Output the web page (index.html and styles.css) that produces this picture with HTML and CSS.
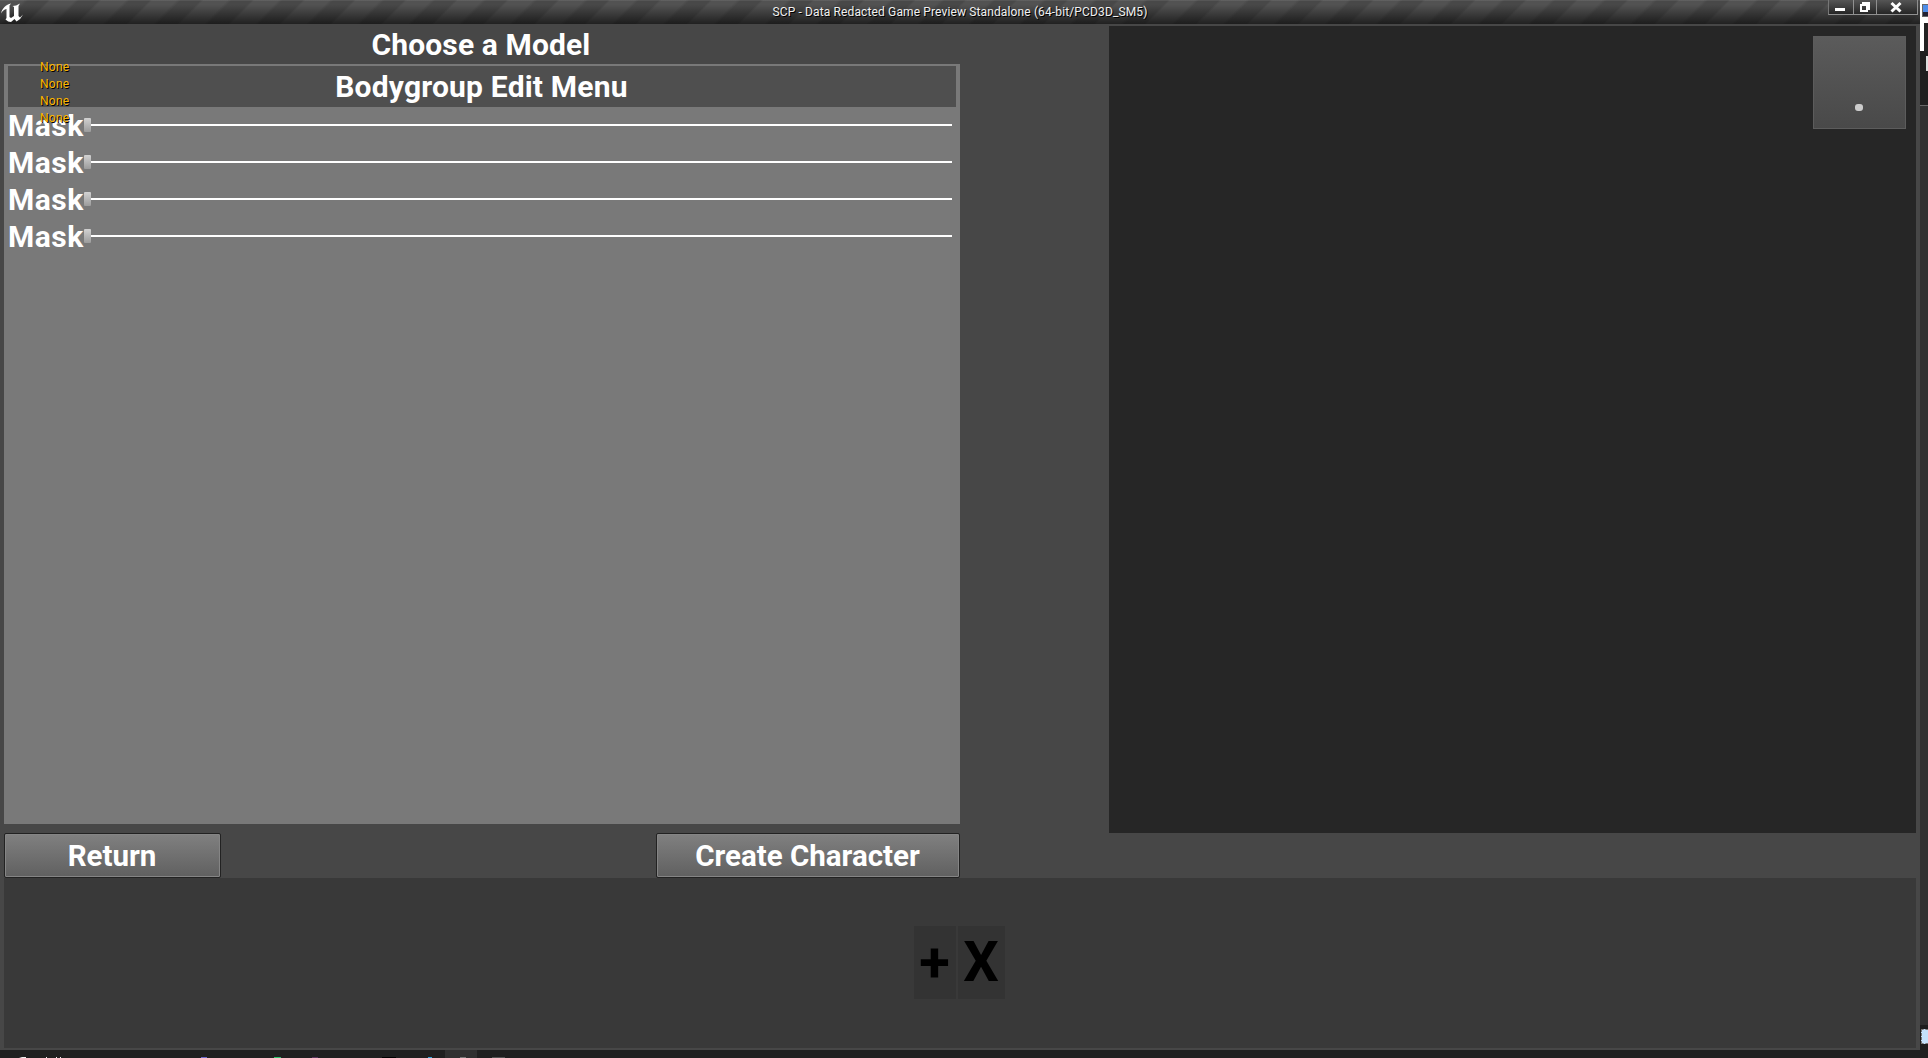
FILE: index.html
```html
<!DOCTYPE html>
<html lang="en">
<head>
<meta charset="utf-8">
<title>SCP - Data Redacted</title>
<link rel="stylesheet" href="styles.css">
</head>
<body>
<div class="desktop">
  <div class="window">
    <header class="titlebar">
      <svg class="logo" viewBox="0 0 24 24"><path d="M1 13.500C2 8.500 6 4.500 11 3.500L9.500 5.500V17L11 18L14 16V7L12.500 6Q16 6 20 3.500L18.500 6V16L20 17.500L23 14.500Q21 19 16.500 21.500L14.500 19L11 22Q8 22 5.500 19.500L6.500 18V9Q3 9.500 1 13.500Z" fill="#fff"/></svg>
      <div class="caption">SCP - Data Redacted Game Preview Standalone (64-bit/PCD3D_SM5)</div>
      <div class="controls">
        <div class="control"><svg viewBox="0 0 14 15"><path d="M2 8H12V11H2Z"/></svg></div>
        <div class="control"><svg viewBox="0 0 14 15"><path class="line" d="M5 4V3H11V9H10M3 5H9V11H3Z"/></svg></div>
        <div class="control wide"><svg viewBox="0 0 14 15"><path class="line cross" d="M2.500 3L11.500 11.500M11.500 3L2.500 11.500"/></svg></div>
      </div>
    </header>
    <main class="content">
      <section class="editor">
        <h1 class="heading">Choose a Model</h1>
        <div class="panel">
          <h2 class="panel-title">Bodygroup Edit Menu</h2>
          <div class="row"><span class="label">Mask</span><div class="slider"><i class="handle"></i></div></div>
          <div class="row"><span class="label">Mask</span><div class="slider"><i class="handle"></i></div></div>
          <div class="row"><span class="label">Mask</span><div class="slider"><i class="handle"></i></div></div>
          <div class="row"><span class="label">Mask</span><div class="slider"><i class="handle"></i></div></div>
        </div>
        <div class="actions">
          <button class="button return">Return</button>
          <button class="button create">Create Character</button>
        </div>
      </section>
      <section class="viewport"><div class="joystick"><i class="dot"></i></div></section>
    </main>
    <footer class="tray">
      <button class="tool plus">+</button>
      <button class="tool times">X</button>
    </footer>
    <div class="debug"><span>None</span><span>None</span><span>None</span><span>None</span></div>
  </div>
  <aside class="behind">
    <div class="behind-icon"><i></i></div>
    <div class="behind-tab"></div>
    <div class="behind-bar"><i></i></div>
    <div class="behind-body"></div>
    <div class="behind-status"><i></i></div>
  </aside>
  <div class="taskbar">
    <svg width="560" height="8" viewBox="0 0 560 8">
      <path fill="#303030" d="M445 0h32v8h-32z"/>
      <path fill="#eee" d="M19 8l3-1h4v1zM46 7h1v1h-1zM56 7h1v1h-1zM60 7h1v1h-1z"/>
      <path fill="#6a66c8" d="M201 7h6v1h-6z"/><path fill="#2fc36b" d="M274 7h7v1h-7z"/>
      <path fill="#58365c" d="M312 7h6v1h-6z"/><path fill="#000" d="M382 7h14v1h-14z"/>
      <path fill="#36a5dc" d="M428 7h4v1h-4z"/><path fill="#777" d="M460 7h6v1h-6z"/><path fill="#555" d="M492 7h13v1h-13z"/>
    </svg>
  </div>
</div>
</body>
</html>
```
FILE: styles.css
```css
* { box-sizing: border-box; }
body { margin: 0; overflow: hidden; background: #202020; font-family: Roboto, sans-serif; }
.desktop { display: grid; grid-template: 1050px 8px / 1920px 8px; width: 1928px; height: 1058px; }
.window { position: relative; display: flex; flex-direction: column; background: #474747; }
.titlebar {
  height: 24px; display: grid; grid-template-columns: 1fr auto 1fr;
  background: linear-gradient(#ffffff14 0 1px, transparent 1px),
    linear-gradient(#0000 0%, #0000 20%, #0009 100%),
    repeating-linear-gradient(135deg, #525252 0 17px, #484848 20px 34px, #525252 36px);
}
.logo { width: 24px; height: 24px; }
.caption { color: #f0f0f0; font-size: 12px; letter-spacing: .13px; line-height: 24px; text-shadow: 1px 1px 0 #000; white-space: nowrap; }
.controls { display: flex; justify-self: end; height: 15px; margin-right: 2px; }
.control { width: 26px; display: flex; justify-content: center; border: 1px solid #909090; border-top: 0; border-left-color: #777; background: linear-gradient(#555, #262626); }
.control + .control { border-left: 0; width: 23px; }
.control + .control.wide { width: 41px; padding-right: 2px; }
.control svg { width: 14px; height: 15px; flex: none; fill: #fff; }
.control:first-child svg { margin-right: 2px; }
.control .line { fill: none; stroke: #fff; stroke-width: 2; }
.control .cross { stroke-width: 3; }
.content { height: 854px; display: flex; justify-content: space-between; padding: 0 4px; }
.editor { width: 956px; display: flex; flex-direction: column; }
.heading, .panel-title { margin: 0; text-align: center; color: #fff; font-weight: 700; font-size: 30px; letter-spacing: .12px; }
.heading { height: 40px; line-height: 41px; padding-right: 2px; }
.panel { height: 760px; padding: 2px 4px; background: #797979; }
.panel-title { height: 41px; line-height: 41px; letter-spacing: .2px; padding-right: 1px; background: #4f4f4f; }
.row { height: 37px; display: flex; align-items: flex-start; padding-right: 4px; }
.label { width: 76px; flex: none; color: #fff; font-size: 30px; letter-spacing: .5px; line-height: 37px; font-weight: 700; }
.slider { flex: 1; height: 14px; margin-top: 11px; display: flex; align-items: center; }
.handle { width: 7px; height: 14px; background: linear-gradient(#d2d2d2, #9b9b9b); border-radius: 1px; }
.slider::after { content: ""; flex: 1; height: 2px; background: #fff; }
.actions { display: flex; justify-content: space-between; padding-top: 9px; }
.button { height: 45px; padding: 2px 1px 0 0; border: 1px solid #222; border-radius: 2px; background: linear-gradient(#808080, #606060); box-shadow: inset 0 0 0 1px #858585; font: 700 29.5px/41px Roboto, sans-serif; color: #fff; }
.return { width: 217px; }
.create { width: 304px; }
.viewport { width: 807px; height: 807px; margin-top: 2px; padding: 10px; background: #262626; display: flex; justify-content: flex-end; }
.joystick { width: 93px; height: 93px; display: flex; justify-content: center; align-items: flex-end; padding: 0 2px 17px 0; border: 1px solid #5c5c5c; background: linear-gradient(#5b5b5b, #494949); }
.dot { width: 8px; height: 7px; border-radius: 3px; background: #ccc; }
.tray { height: 170px; margin: 0 4px; padding: 48px 1px 0 0; display: flex; justify-content: center; gap: 2px; background: #393939; }
.tool { height: 73px; padding: 0; border: 0; background: #333; color: #000; font: 700 56px/71px Roboto, sans-serif; }
.plus { width: 42px; padding-right: 1px; }
.times { width: 47px; padding-right: 1px; }
.debug { position: absolute; left: 40px; top: 59px; display: flex; flex-direction: column; color: #fdb600; font-size: 12px; letter-spacing: .25px; line-height: 17px; text-shadow: 1px 1px 0 #000; }
.behind { display: flex; flex-direction: column; background: #303030; }
.behind-icon { height: 23px; padding: 4px 0 0 2px; background: #fff; }
.behind-icon i { display: block; width: 6px; height: 13px; border: 1px solid #666; border-right: 0; background: linear-gradient(#4d8ce8 60%, #223 60%); }
.behind-tab { height: 28px; border-left: 4px solid #fff; background: #222; }
.behind-bar { height: 55px; padding: 5px 0 0 6px; border-bottom: 1px solid #666; background: #1f1f1f; }
.behind-bar i { display: block; height: 15px; background: #ddd; }
.behind-body { height: 919px; background: #303030; }
.behind-status { flex: 1; padding: 4px 0 0 1px; background: #1e1e1e; }
.behind-status i { display: block; height: 15px; border: 1px dashed #777; border-right: 0; background: #c4e1fb; }
.taskbar { grid-column: 1 / 3; background: #202020; }
.taskbar svg { display: block; }
```
